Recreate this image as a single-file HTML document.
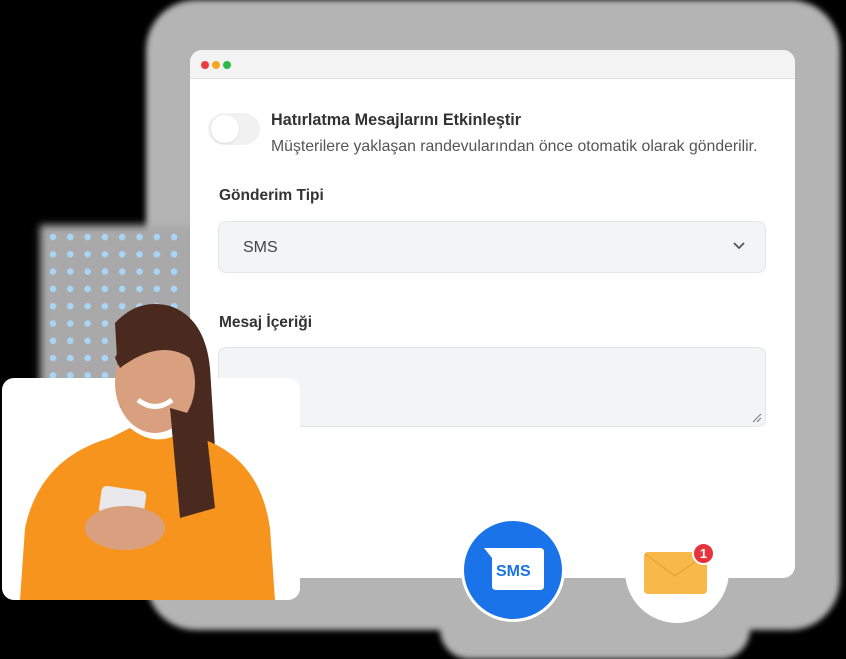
<!DOCTYPE html>
<html><head><meta charset="utf-8"><style>
*{margin:0;padding:0;box-sizing:border-box}
body{width:846px;height:659px;background:#000;position:relative;overflow:hidden;font-family:"Liberation Sans",Arial,sans-serif}
.abs{position:absolute}
.shadow{left:146px;top:0px;width:694px;height:630px;background:#b4b4b4;border-radius:50px;filter:blur(3px)}
.win{left:190px;top:50px;width:605px;height:528px;background:#fff;border-radius:12px;overflow:hidden}
.bar{height:29px;background:#f3f3f4;border-bottom:1px solid #e2e2e2}
.dot{position:absolute;top:11px;width:8px;height:8px;border-radius:50%}
.t{position:absolute;color:#333;white-space:nowrap}
</style></head><body>
<div class="abs shadow"></div>
<div class="abs" style="left:440px;top:600px;width:310px;height:59px;background:#b4b4b4;border-radius:30px;filter:blur(3px)"></div>
<div class="abs" style="left:40px;top:225px;width:160px;height:170px;background:#a9a9a9;filter:blur(4px)"></div>
<svg class="abs" style="left:48px;top:232px" width="140" height="150">
<defs><pattern id="p" width="17.3" height="17.3" patternUnits="userSpaceOnUse"><circle cx="5" cy="5" r="3.3" fill="#a8d4f5"/></pattern></defs>
<rect width="140" height="150" fill="url(#p)"/></svg>
<div class="abs win">
<div class="bar"></div>
<div class="dot" style="left:11px;background:#ee3b3b"></div>
<div class="dot" style="left:22px;background:#f5a623"></div>
<div class="dot" style="left:33px;background:#2fb84a"></div>
<div class="abs" style="left:18px;top:63px;width:52px;height:32px;border-radius:16px;background:#f1f1f2"></div>
<div class="abs" style="left:21px;top:65px;width:28px;height:28px;border-radius:50%;background:#fff;box-shadow:0 1px 2px rgba(0,0,0,.1)"></div>
<div class="t" style="left:81px;top:61px;font-size:16.2px;font-weight:bold">Hatırlatma Mesajlarını Etkinleştir</div>
<div class="t" style="left:81px;top:88px;font-size:15.8px;color:#555">Müşterilere yaklaşan randevularından önce otomatik olarak gönderilir.</div>
<div class="t" style="left:29px;top:137px;font-size:15.5px;font-weight:bold">Gönderim Tipi</div>
<div class="abs" style="left:28px;top:171px;width:548px;height:52px;background:#f3f4f6;border:1px solid #e2e4e8;border-radius:8px"></div>
<div class="t" style="left:53px;top:189px;font-size:16px;color:#444">SMS</div>
<svg class="abs" style="left:542px;top:191px" width="14" height="10"><path d="M2 2l5 5 5-5" stroke="#555" stroke-width="1.8" fill="none"/></svg>
<div class="t" style="left:29px;top:264px;font-size:15.5px;font-weight:bold">Mesaj İçeriği</div>
<div class="abs" style="left:28px;top:297px;width:548px;height:80px;background:#f3f4f6;border:1px solid #e2e4e8;border-radius:8px"></div>
<svg class="abs" style="left:562px;top:363px" width="10" height="10"><path d="M1 9L9 1M5 9L9 5" stroke="#777" stroke-width="1"/></svg>
</div>
<div class="abs" style="left:2px;top:378px;width:298px;height:222px;background:#fff;border-radius:12px"></div>
<svg class="abs" style="left:20px;top:298px" width="260" height="302">
<path d="M95 25 Q118 0 150 8 Q185 20 190 70 L195 150 Q200 200 205 220 L160 220 L150 110 L100 110 Z" fill="#4a2a1f"/>
<ellipse cx="135" cy="85" rx="40" ry="50" fill="#d9a07f"/>
<path d="M95 60 Q110 25 150 30 Q175 40 178 80 L170 60 Q140 40 100 70Z" fill="#4a2a1f"/>
<path d="M0 302 L5 230 Q20 160 90 140 L110 130 Q135 150 160 135 L180 140 Q240 160 250 230 L255 302Z" fill="#f7941d"/>
<path d="M150 110 L160 220 L195 210 L185 120Z" fill="#4a2a1f"/>
<rect x="80" y="190" width="45" height="28" rx="5" fill="#e8e8ea" transform="rotate(8 100 205)"/>
<ellipse cx="105" cy="230" rx="40" ry="22" fill="#d9a07f"/>
<path d="M118 102 Q135 115 152 102" stroke="#fff" stroke-width="5" fill="none"/>
</svg>
<div class="abs" style="left:461px;top:518px;width:104px;height:104px;border-radius:50%;background:#1a73e8;border:3px solid #fff"></div>
<svg class="abs" style="left:482px;top:546px" width="64" height="48"><path d="M2 2 H58 Q62 2 62 6 V40 Q62 44 58 44 H14 Q10 44 10 40 V12 Z" fill="#fff"/></svg>
<div class="t" style="left:496px;top:563px;font-size:16px;font-weight:bold;color:#1a73e8">SMS</div>
<div class="abs" style="left:625px;top:519px;width:104px;height:104px;border-radius:50%;background:#fff"></div>
<svg class="abs" style="left:644px;top:550px" width="64" height="46"><rect x="0" y="2" width="63" height="42" rx="4" fill="#f9b94a"/><path d="M1 4 L31 26 L62 4" stroke="#eaa53a" stroke-width="1.5" fill="none"/></svg>
<div class="abs" style="left:692px;top:542px;width:23px;height:23px;border-radius:50%;background:#e8323c;border:2px solid #fff;color:#fff;font-size:13px;font-weight:bold;text-align:center;line-height:19px">1</div>
</body></html>
